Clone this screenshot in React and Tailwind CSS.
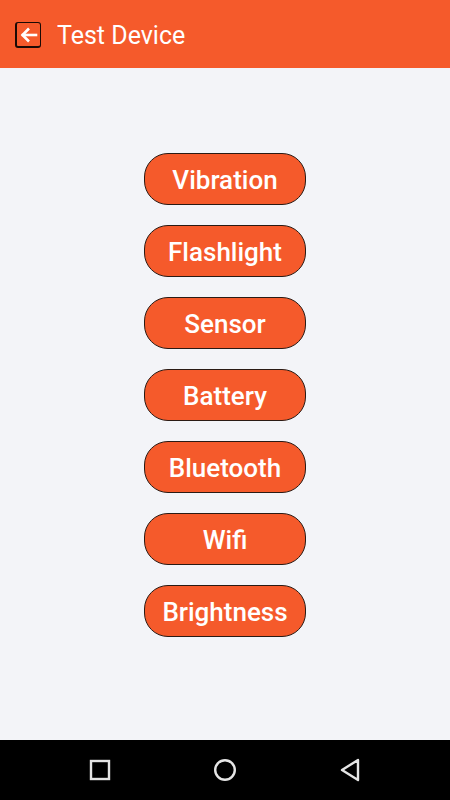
import React from "react";

const items = ["Vibration", "Flashlight", "Sensor", "Battery", "Bluetooth", "Wifi", "Brightness"];

export default function App() {
  return (
    <div className="w-[450px] h-[800px] flex flex-col bg-[#f3f4f8]" style={{ fontFamily: "Roboto, 'Liberation Sans', sans-serif" }}>
      <div className="h-[68px] bg-[#f55a2b] flex items-center pl-[15px] shrink-0">
        <div className="mt-[2px] w-[26px] h-[26px] rounded-[3px] border border-[#1a0a05] border-l-[2px] border-b-[2px] bg-[#f55a2b] flex items-center justify-center">
          <svg width="20" height="20" viewBox="0 0 20 20" fill="none" stroke="white" strokeWidth="2.6" strokeLinecap="square">
            <path d="M4 10 H17" />
            <path d="M10 3.5 L3.5 10 L10 16.5" strokeLinecap="butt" />
          </svg>
        </div>
        <span className="ml-[16px] mt-[3px] text-white text-[25px] leading-none">Test Device</span>
      </div>
      <div className="flex-1 flex flex-col items-center pt-[85px] gap-[20px]">
        {items.map((t) => (
          <button
            key={t}
            className="w-[162px] h-[52px] pt-[2px] rounded-[24px] bg-[#f55a2b] border border-[#2a1a14] text-white text-[26px] font-medium flex items-center justify-center"
          >
            {t}
          </button>
        ))}
      </div>
      <div className="h-[60px] bg-black flex items-center justify-center shrink-0">
        <div className="w-[125px] flex justify-center">
          <svg width="22" height="22" viewBox="0 0 22 22" fill="none" stroke="#e5e5e5" strokeWidth="2.4">
            <rect x="2" y="2" width="18" height="18" />
          </svg>
        </div>
        <div className="w-[125px] flex justify-center">
          <svg width="24" height="24" viewBox="0 0 24 24" fill="none" stroke="#e5e5e5" strokeWidth="2.4">
            <circle cx="12" cy="12" r="9.8" />
          </svg>
        </div>
        <div className="w-[125px] flex justify-center">
          <svg width="22" height="24" viewBox="0 0 22 24" fill="none" stroke="#e5e5e5" strokeWidth="2.4" strokeLinejoin="round">
            <path d="M19 2 L3 12 L19 22 Z" />
          </svg>
        </div>
      </div>
    </div>
  );
}
